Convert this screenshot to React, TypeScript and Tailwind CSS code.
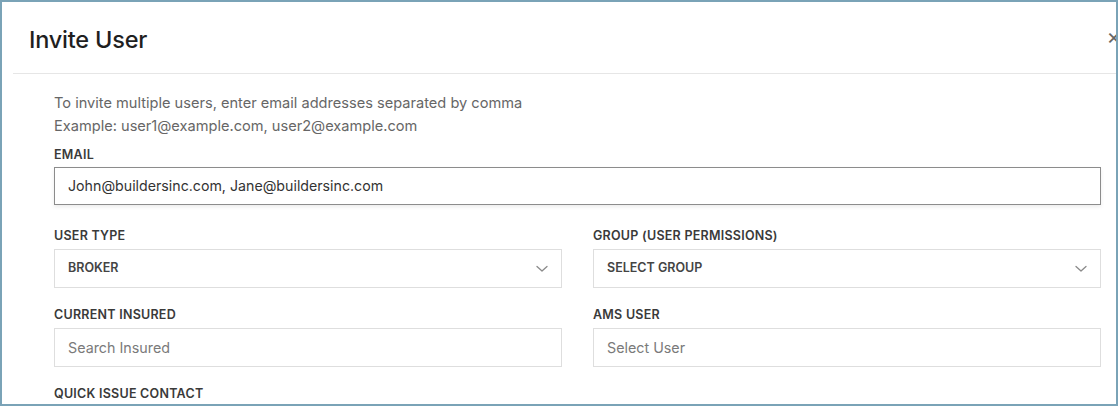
import React from "react";

const font = { fontFamily: 'Inter, "Liberation Sans", Arial, sans-serif' };

function Chevron() {
  return (
    <svg width="12" height="8" viewBox="0 0 12 8" fill="none" className="shrink-0">
      <path d="M1 1.5L6 6L11 1.5" stroke="#8a8a8a" strokeWidth="1.3" strokeLinecap="round" strokeLinejoin="round" />
    </svg>
  );
}

function Label({ children }: { children: React.ReactNode }) {
  return (
    <div className="text-[12.5px] leading-[16px] font-semibold uppercase tracking-[0.25px] text-[#3a3a3a] mb-[5px]">
      {children}
    </div>
  );
}

function SelectBox({ value }: { value: string }) {
  return (
    <div className="h-[39px] border border-[#dedede] bg-white flex items-center justify-between pl-[13px] pr-[13px]">
      <span className="text-[12.5px] font-semibold uppercase text-[#444]">{value}</span>
      <Chevron />
    </div>
  );
}

function TextBox({ placeholder }: { placeholder: string }) {
  return (
    <div className="h-[39px] border border-[#dedede] bg-white flex items-center pl-[13px]">
      <span className="text-[14.3px] text-[#7a7a7a]">{placeholder}</span>
    </div>
  );
}

export default function App() {
  return (
    <div className="w-[1120px] h-[408px] bg-white" style={font}>
      <div className="w-[1118px] h-[406px] border-2 border-[#7aa3b7] overflow-hidden bg-white">
        <div className="ml-[11px] w-[1120px]">
          <div className="h-[72px] border-b border-[#e6e6e6] flex items-center justify-between pl-[16px] pr-[12px]">
            <h2 className="text-[23.5px] font-medium text-[#1f1f1f] tracking-[-0.2px] pt-[4px]">Invite User</h2>
            <span className="text-[22px] text-[#666] leading-none pb-[4px]">×</span>
          </div>
          <div className="pl-[41px] pt-[18px] w-[1088px]">
            <div className="text-[14.6px] leading-[23px] text-[#666]">
              <p>To invite multiple users, enter email addresses separated by comma</p>
              <p>Example: user1@example.com, user2@example.com</p>
            </div>
            <div className="mt-[9px]">
              <div className="text-[12.5px] leading-[16px] font-semibold uppercase tracking-[0.25px] text-[#3a3a3a] mb-[4px]">
                Email
              </div>
              <div className="h-[38px] border border-[#8c8c8c] bg-white flex items-center pl-[13px] shadow-[0_2px_4px_rgba(0,0,0,0.08)]">
                <span className="text-[14.2px] text-[#333]">John@buildersinc.com, Jane@buildersinc.com</span>
              </div>
            </div>
            <div className="grid grid-cols-2 gap-x-[31px] mt-[23px]">
              <div>
                <Label>User Type</Label>
                <SelectBox value="Broker" />
              </div>
              <div>
                <Label>Group (User Permissions)</Label>
                <SelectBox value="Select Group" />
              </div>
            </div>
            <div className="grid grid-cols-2 gap-x-[31px] mt-[19px]">
              <div>
                <Label>Current Insured</Label>
                <TextBox placeholder="Search Insured" />
              </div>
              <div>
                <Label>AMS User</Label>
                <TextBox placeholder="Select User" />
              </div>
            </div>
            <div className="mt-[19px]">
              <Label>Quick Issue Contact</Label>
            </div>
          </div>
        </div>
      </div>
    </div>
  );
}
